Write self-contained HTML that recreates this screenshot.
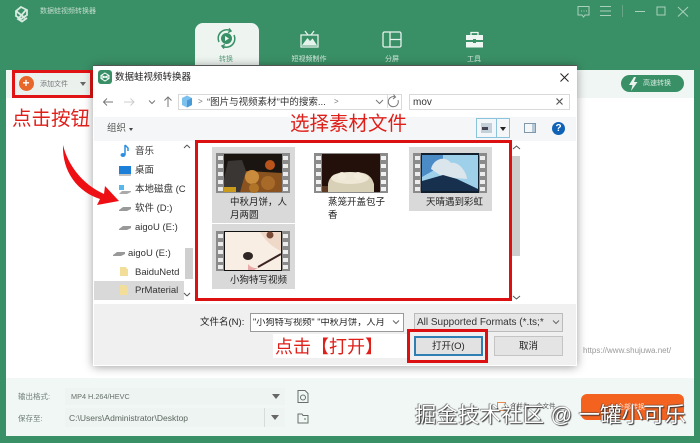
<!DOCTYPE html>
<html lang="zh"><head><meta charset="utf-8"><title>数据蛙视频转换器</title>
<style>
html,body{margin:0;padding:0;background:#3a9066}
body{width:700px;height:443px;position:relative;overflow:hidden;background:#3a9066;font-family:"Liberation Sans","Noto Sans CJK SC",sans-serif;color:#333;filter:blur(.3px)}
div,span,svg{position:absolute}
.t{white-space:nowrap;line-height:1}
.red{color:#df1f1a;font-family:"Noto Sans CJK SC",sans-serif;white-space:nowrap;line-height:1}
.nav{font-size:7px;color:#d8eae1;white-space:nowrap;line-height:1;transform:translateX(-50%)}
.n{font-size:9.5px;color:#333;left:135px;white-space:nowrap;line-height:1}
.f{font-size:9.5px;color:#222;line-height:13px}
</style></head>
<body>
<!-- header -->
<svg style="left:13px;top:5px" width="17" height="18" viewBox="0 0 17 18" fill="none" stroke="#d7ebe1" stroke-width="1.8"><path d="M8 2 L14 5 L14 10 L8 14 L3 11 L3 6 Z M3 6 L12 13 M13 5 L5 14 L9 16.5 L14 13"/></svg>
<div class="t" style="left:40px;top:8px;font-size:7px;color:#c3dccf">数据蛙视频转换器</div>
<svg style="left:576px;top:4px" width="115" height="15" viewBox="0 0 115 15" fill="none" stroke="#a9d0bc" stroke-width="1"><path d="M2 2.5 H13 V11 H9 L7.5 13 L6 11 H2 Z"/><path d="M5 7 h1 M7.5 7 h1 M10 7 h1"/><path d="M24 2.5 H35 M24 7 H35 M24 11.5 H35"/><path d="M46.5 1 V13" stroke="#64a685"/><path d="M59 7.5 H69"/><path d="M81 3 H89 V11 H81 Z"/><path d="M102 3 L112 12.5 M112 3 L102 12.5"/></svg>
<div style="left:195px;top:23px;width:64px;height:50px;background:#eef5f1;border-radius:8px 8px 0 0"></div>
<svg style="left:216px;top:28px" width="21" height="21" viewBox="0 0 21 21" fill="none" stroke="#3a9066" stroke-width="1.5"><path d="M3 14 A8.5 8.5 0 0 1 14 2.5 M18 7 A8.5 8.5 0 0 1 7 18.5"/><path d="M13 0.5 L15 3 L12 4.5 M8 20.5 L6 18 L9 16.5"/><circle cx="10.5" cy="10.5" r="5.5" fill="#3a9066" stroke="none"/><path d="M9 8 L13 10.5 L9 13 Z" fill="#eef5f1" stroke="none"/></svg>
<div class="nav" style="left:226px;top:55.5px;color:#5c9c7e">转换</div>
<svg style="left:300px;top:30px" width="19" height="18" viewBox="0 0 19 18" fill="none" stroke="#e6f2ec" stroke-width="1.3"><path d="M1 5 H18 V17 H1 Z"/><path d="M5 1 L8 5 M14 1 L11 5"/><path d="M3 15 L7.5 9 L10 12 L12.5 9.5 L16 15 Z" fill="#e6f2ec"/></svg>
<div class="nav" style="left:309px;top:55.5px">短视频制作</div>
<svg style="left:382px;top:31px" width="20" height="17" viewBox="0 0 20 17" fill="none" stroke="#e6f2ec" stroke-width="1.3"><rect x="1" y="1" width="18" height="15" rx="1.5"/><path d="M8 1 V16 M8 8.5 H19"/></svg>
<div class="nav" style="left:392px;top:55.5px">分屏</div>
<svg style="left:465px;top:31px" width="19" height="17" viewBox="0 0 19 17"><path d="M6 4 V1.5 H13 V4" fill="none" stroke="#eef6f2" stroke-width="1.3"/><path d="M1 4 H18 V9 H1 Z M1 11 H18 V16.5 H1 Z" fill="#eef6f2"/><rect x="8" y="8" width="3" height="4" fill="#3a9066"/></svg>
<div class="nav" style="left:474px;top:55.5px">工具</div>
<!-- main panel -->
<div style="left:6px;top:70px;width:688px;height:366px;background:#fff"></div>
<div style="left:6px;top:70px;width:688px;height:28px;background:#f0f6f3"></div>
<div style="left:6px;top:378px;width:688px;height:58px;background:#f1f7f5"></div>
<div style="left:12px;top:70px;width:75px;height:22px;border:3px solid #e01414;background:#ebf2ee"></div>
<div style="left:18.500px;top:75.500px;width:15px;height:15px;border-radius:50%;background:#e8682c"></div>
<div class="t" style="left:22.500px;top:77px;font-size:12px;color:#fff;font-weight:bold">+</div>
<div class="t" style="left:40px;top:80.500px;font-size:7px;color:#777">添加文件</div>
<div style="left:80px;top:82px;border:3.500px solid transparent;border-top:4px solid #666"></div>
<div style="left:621px;top:75px;width:63px;height:17px;border-radius:9px;background:#3a9066"></div>
<svg style="left:628px;top:77px" width="10" height="14" viewBox="0 0 10 14"><path d="M6 0 L1 8 H4.5 L3 14 L9.5 5 H6 L8 0 Z" fill="#e9f4ee"/></svg>
<div class="t" style="left:643px;top:80px;font-size:7px;color:#d4e9de">高速转换</div>
<svg style="left:540px;top:212px" width="31" height="19" viewBox="0 0 31 19"><rect width="31" height="19" fill="#777"/><rect x="3" y="1" width="25" height="17" fill="#f4dcc9"/><circle cx="14" cy="12" r="2.5" fill="#35241f"/><path d="M14 16 L25 8" stroke="#5b2a26" stroke-width="1.3"/><circle cx="24" cy="3" r="2" fill="#8b5a44"/><g fill="#eee"><rect x="1" y="2" width="1.5" height="2"/><rect x="1" y="6" width="1.5" height="2"/><rect x="1" y="10" width="1.5" height="2"/><rect x="1" y="14" width="1.5" height="2"/><rect x="28.5" y="2" width="1.5" height="2"/><rect x="28.5" y="6" width="1.5" height="2"/><rect x="28.5" y="10" width="1.5" height="2"/><rect x="28.5" y="14" width="1.5" height="2"/></g></svg>
<div class="t" style="left:583px;top:347px;font-size:8px;color:#9a9a9a">https://www.shujuwa.net/</div>
<!-- bottom bar -->
<div class="t" style="left:18px;top:393px;font-size:7.5px;color:#6e7c76">输出格式:</div>
<div class="t" style="left:18px;top:415px;font-size:7.5px;color:#6e7c76">保存至:</div>
<div style="left:65px;top:388px;width:220px;height:17px;background:#eef4f1"></div>
<div style="left:65px;top:408px;width:220px;height:19px;background:#eef4f1"></div>
<div class="t" style="left:71px;top:393px;font-size:7.3px;color:#66706b">MP4 H.264/HEVC</div>
<div class="t" style="left:69px;top:414px;font-size:8.5px;color:#5c6661">C:\Users\Administrator\Desktop</div>
<div style="left:272px;top:394px;border:4px solid transparent;border-top:5px solid #666"></div>
<div style="left:271px;top:415px;border:4px solid transparent;border-top:5px solid #666"></div>
<div style="left:264px;top:408px;width:1px;height:19px;background:#d5dcd9"></div>
<svg style="left:296px;top:389px" width="14" height="36" viewBox="0 0 14 36" fill="none" stroke="#66706b"><path d="M2 1.5 H9 L12 4.5 V13.5 H2 Z"/><circle cx="7" cy="8.5" r="2.5"/><path d="M2 25 H6 L7 26.5 H12 V34 H2 Z"/><path d="M8 30 H10"/></svg>
<div style="left:581px;top:394px;width:103px;height:26px;border-radius:6px;background:#f4621f"></div>
<div class="t" style="left:617px;top:403.500px;font-size:7px;color:#ffe3d4">全部转换</div>
<div style="left:497px;top:402px;width:7px;height:7px;border:1.5px solid #e88a52;background:#f8f8f5"></div>
<div class="t" style="left:510px;top:404px;font-size:6.5px;color:#555">合并为一个文件</div>
<!-- dialog -->
<div style="left:93px;top:65px;width:484px;height:301px;background:#fff;box-shadow:0 1px 9px rgba(0,0,0,.38);border-top:1px solid #555;box-sizing:border-box"></div>
<div style="left:98px;top:70px;width:14px;height:14px;border-radius:3px;background:#3a9066"></div>
<svg style="left:100px;top:72px" width="10" height="10" viewBox="0 0 10 10" fill="none" stroke="#fff" stroke-width="1"><path d="M5 1 L9 3.5 V6.5 L5 9 L1 6.500 V3.5 Z M1 3.5 L9 6.5 M9 3.5 L1 6.5"/></svg>
<div class="t" style="left:115px;top:72.500px;font-size:9.5px;color:#222">数据蛙视频转换器</div>
<svg style="left:559px;top:72px" width="11" height="11" viewBox="0 0 11 11" stroke="#222"><path d="M1.5 1.5 L9.5 9.5 M9.5 1.5 L1.5 9.5"/></svg>
<!-- address row -->
<svg style="left:102px;top:94px" width="72" height="16" viewBox="0 0 72 16" fill="none" stroke="#777"><path d="M11 8 H1.5 M5 4.5 L1.5 8 L5 11.5"/><path d="M22 8 H32 M28.5 4.5 L32 8 L28.5 11.5" stroke="#ccc"/><path d="M47 6.5 L50 9.5 L53 6.5"/><path d="M66 13 V3 M62.5 6.5 L66 3 L69.5 6.5"/></svg>
<div style="left:178px;top:94px;width:224px;height:16px;border:1px solid #d9d9d9;box-sizing:border-box"></div>
<svg style="left:181px;top:95px" width="12" height="13" viewBox="0 0 12 13"><path d="M1 3 L6 .5 L11 3 V10 L6 12.5 L1 10 Z" fill="#7cc0ee"/><path d="M6 5.5 L11 3 V10 L6 12.5 Z" fill="#4a9ad8"/></svg>
<div class="t" style="left:198px;top:98px;font-size:8px;color:#777">&gt;</div>
<div class="t" style="left:207px;top:97.500px;font-size:9.5px;color:#333">“图片与视频素材”中的搜索...</div>
<div class="t" style="left:334px;top:98px;font-size:8px;color:#777">&gt;</div>
<svg style="left:374px;top:94px" width="28" height="15" viewBox="0 0 28 15" fill="none" stroke="#777"><path d="M2 6 L5.5 9.5 L9 6"/><path d="M13.5 1 V14" stroke="#ddd"/><path d="M24 6 A5 5 0 1 1 21 3 M19.5 .5 L21.5 3 L19 5"/></svg>
<div style="left:409px;top:94px;width:161px;height:16px;border:1px solid #d9d9d9;box-sizing:border-box"></div>
<div class="t" style="left:413px;top:97.500px;font-size:10px;color:#333">mov</div>
<svg style="left:555px;top:97px" width="9" height="9" viewBox="0 0 9 9" stroke="#555" stroke-width="1.2"><path d="M1.5 1.5 L7.5 7.5 M7.5 1.5 L1.5 7.5"/></svg>
<!-- toolbar -->
<div style="left:94px;top:117px;width:482px;height:24px;background:#f5f6f7"></div>
<div class="t" style="left:107px;top:124px;font-size:9.5px;color:#555">组织</div>
<div style="left:129px;top:128px;border:2.5px solid transparent;border-top:3px solid #444"></div>
<div style="left:476px;top:118px;width:21px;height:20px;border:1px solid #8cc3dc;box-sizing:border-box;background:#f4f7f9"></div>
<div style="left:496px;top:118px;width:14px;height:20px;border:1px solid #8cc3dc;box-sizing:border-box"></div>
<svg style="left:481px;top:123px" width="11" height="10" viewBox="0 0 11 10"><rect width="11" height="10" fill="#c3d0da"/><rect x="1" y="4" width="6" height="3" fill="#445"/></svg>
<div style="left:500px;top:127px;border:3px solid transparent;border-top:4px solid #222"></div>
<svg style="left:524px;top:123px" width="12" height="10" viewBox="0 0 12 10"><rect x=".5" y=".5" width="11" height="9" fill="#f5f6f7" stroke="#7f98ab"/><rect x="8" y="1" width="3" height="8" fill="#b5c9d8"/></svg>
<div style="left:552px;top:122px;width:13px;height:13px;border-radius:50%;background:#0f62b5;color:#fff;font:bold 10px/13px 'Liberation Sans',sans-serif;text-align:center">?</div>
<!-- nav pane -->
<div style="left:94px;top:281px;width:90px;height:19px;background:#d9d9d9"></div>
<div class="n" style="top:147px">音乐</div>
<div class="n" style="top:166px">桌面</div>
<div class="n" style="top:185px">本地磁盘 (C</div>
<div class="n" style="top:204px">软件 (D:)</div>
<div class="n" style="top:223px">aigoU (E:)</div>
<div class="n" style="top:249px;left:128px">aigoU (E:)</div>
<div class="n" style="top:268px">BaiduNetd</div>
<div class="n" style="top:286px">PrMaterial</div>
<svg style="left:112px;top:142px" width="80" height="158" viewBox="0 0 80 158" fill="none"><path d="M13 3 V13 M13 3 L16 6 L16 9" stroke="#2d8ee0" stroke-width="1.5"/><ellipse cx="11" cy="13" rx="2.5" ry="2" fill="#2d8ee0"/><rect x="7" y="24" width="12" height="8" fill="#1d7fd8"/><path d="M7 33 H19" stroke="#888"/><rect x="7" y="43" width="5" height="5" fill="#58b8ea"/><path d="M7 52 L10 49 H19 V50 L15 52 H7 Z" fill="#aaa"/><path d="M7 68 L11 65 H19 L19 67 L15 69 H7 Z" fill="#999"/><path d="M7 87 L11 84 H19 L19 86 L15 88 H7 Z" fill="#999"/><path d="M1 113 L5 110 H13 L13 112 L9 114 H1 Z" fill="#999"/><path d="M8 125 H14 L15 127 H16 V134 H8 Z" fill="#f2de98"/><path d="M8 143 H14 L15 145 H16 V153 H8 Z" fill="#f2de98"/><path d="M75 3 L72 6 M75 3 L78 6" stroke="#555"/><path d="M75 154 L72 151 M75 154 L78 151" stroke="#555"/></svg>
<div style="left:185px;top:248px;width:8px;height:31px;background:#cfcfcf"></div>
<!-- right scrollbar -->
<div style="left:512px;top:141px;width:17px;height:169px;background:#fff"></div>
<div style="left:512px;top:156px;width:8px;height:100px;background:#cdcdcd"></div>
<svg style="left:512px;top:144px" width="9" height="157" viewBox="0 0 9 157" fill="none" stroke="#555"><path d="M1 5 L4.5 2 L8 5"/><path d="M1 152 L4.5 155 L8 152"/></svg>
<!-- files -->
<div style="left:212px;top:147px;width:83px;height:76px;background:#d9d9d9"></div>
<div style="left:212px;top:224px;width:83px;height:65px;background:#d9d9d9"></div>
<div style="left:409px;top:147px;width:83px;height:64px;background:#d9d9d9"></div>
<svg style="left:216px;top:153px" width="74" height="40" viewBox="0 0 74 40"><rect width="74" height="40" fill="#8b8b8b"/><rect x="8" y="1" width="58" height="38" fill="#1b1512"/><path d="M8 26 L12 8 L26 7 L30 18 L24 39 H8 Z" fill="#3a3634"/><path d="M24 39 L30 18 L66 20 V39 Z" fill="#8a521f"/><circle cx="36" cy="24" r="7" fill="#c98c3c"/><circle cx="52" cy="30" r="7" fill="#a86a28"/><circle cx="54" cy="12" r="5" fill="#b8531c"/><circle cx="38" cy="35" r="5" fill="#b07428"/><path d="M8 34 H20 V39 H8 Z" fill="#c99a1c"/><g fill="#ececec"><rect x="2" y="3" width="5" height="4"/><rect x="2" y="11" width="5" height="4"/><rect x="2" y="19" width="5" height="4"/><rect x="2" y="27" width="5" height="4"/><rect x="2" y="34" width="5" height="4"/><rect x="67" y="3" width="5" height="4"/><rect x="67" y="11" width="5" height="4"/><rect x="67" y="19" width="5" height="4"/><rect x="67" y="27" width="5" height="4"/><rect x="67" y="34" width="5" height="4"/></g></svg>
<svg style="left:314px;top:153px" width="74" height="40" viewBox="0 0 74 40"><rect width="74" height="40" fill="#8b8b8b"/><rect x="8" y="1" width="58" height="38" fill="#24100a"/><path d="M14 31 C16 20 26 19 36 20 C48 18 57 20 60 31 V39 H14 Z" fill="#d9d0b8"/><ellipse cx="36" cy="25" rx="19" ry="6" fill="#efe8d6"/><circle cx="28" cy="23" r="4" fill="#f3ecdc"/><circle cx="44" cy="23" r="4" fill="#f3ecdc"/><path d="M8 33 H14 V39 H8 Z" fill="#5c3a24"/><g fill="#f2f2f2"><rect x="2" y="3" width="5" height="4"/><rect x="2" y="11" width="5" height="4"/><rect x="2" y="19" width="5" height="4"/><rect x="2" y="27" width="5" height="4"/><rect x="2" y="34" width="5" height="4"/><rect x="67" y="3" width="5" height="4"/><rect x="67" y="11" width="5" height="4"/><rect x="67" y="19" width="5" height="4"/><rect x="67" y="27" width="5" height="4"/><rect x="67" y="34" width="5" height="4"/></g></svg>
<svg style="left:413px;top:153px" width="74" height="40" viewBox="0 0 74 40"><rect width="74" height="40" fill="#8b8b8b"/><rect x="8" y="0" width="58" height="40" fill="#12202e"/><rect x="9" y="2" width="56" height="36" fill="#9fd0ea"/><path d="M9 2 H30 V12 L9 24 Z" fill="#4b8cc6"/><path d="M18 16 C20 6 32 2 38 10 C46 8 54 20 54 26 L30 24 Z" fill="#dbe5ec"/><path d="M9 28 L30 22 L44 26 L65 36 V38 H9 Z" fill="#16304e"/><g fill="#ececec"><rect x="2" y="3" width="5" height="4"/><rect x="2" y="11" width="5" height="4"/><rect x="2" y="19" width="5" height="4"/><rect x="2" y="27" width="5" height="4"/><rect x="2" y="34" width="5" height="4"/><rect x="67" y="3" width="5" height="4"/><rect x="67" y="11" width="5" height="4"/><rect x="67" y="19" width="5" height="4"/><rect x="67" y="27" width="5" height="4"/><rect x="67" y="34" width="5" height="4"/></g></svg>
<svg style="left:216px;top:231px" width="74" height="40" viewBox="0 0 74 40"><rect width="74" height="40" fill="#8b8b8b"/><rect x="8" y="0" width="58" height="40" fill="#111"/><rect x="9" y="1" width="56" height="38" fill="#f8eee4"/><path d="M44 1 H65 V20 C56 16 50 10 44 1 Z" fill="#efd8c8"/><circle cx="54" cy="4" r="3.5" fill="#7b4b38"/><ellipse cx="32" cy="25" rx="5" ry="4" fill="#2f2522"/><path d="M42 36 L65 23" stroke="#3a2322" stroke-width="2"/><path d="M32 33 C36 38 42 38 46 35 L38 39 H32 Z" fill="#e9a9a6"/><g fill="#ececec"><rect x="2" y="3" width="5" height="4"/><rect x="2" y="11" width="5" height="4"/><rect x="2" y="19" width="5" height="4"/><rect x="2" y="27" width="5" height="4"/><rect x="2" y="34" width="5" height="4"/><rect x="67" y="3" width="5" height="4"/><rect x="67" y="11" width="5" height="4"/><rect x="67" y="19" width="5" height="4"/><rect x="67" y="27" width="5" height="4"/><rect x="67" y="34" width="5" height="4"/></g></svg>
<div class="f" style="left:230px;top:196px;width:60px">中秋月饼，人<br>月两圆</div>
<div class="f" style="left:328px;top:196px;width:60px">蒸笼开盖包子<br>香</div>
<div class="f" style="left:426px;top:196px;white-space:nowrap">天晴遇到彩虹</div>
<div class="f" style="left:230px;top:274px;white-space:nowrap">小狗特写视频</div>
<!-- red box -->
<div style="left:195px;top:140px;width:311px;height:155px;border:3px solid #dc1010"></div>
<!-- dialog bottom -->
<div style="left:94px;top:304px;width:482px;height:61px;background:#f0f0f0"></div>
<div class="t" style="left:200px;top:318px;font-size:9.5px;color:#222">文件名(N):</div>
<div style="left:250px;top:313px;width:154px;height:19px;border:1px solid #9a9a9a;background:#fff;box-sizing:border-box"></div>
<div class="t" style="left:253px;top:318px;font-size:9.2px;color:#222;width:135px;overflow:hidden">"小狗特写视频" "中秋月饼，人月</div>
<svg style="left:392px;top:320px" width="8" height="5" viewBox="0 0 8 5" fill="none" stroke="#666"><path d="M1 .5 L4 3.5 L7 .5"/></svg>
<div style="left:414px;top:313px;width:149px;height:19px;border:1px solid #bbb;background:#e6e6e6;box-sizing:border-box"></div>
<div class="t" style="left:417px;top:318px;font-size:10px;color:#333">All Supported Formats (*.ts;*</div>
<svg style="left:552px;top:320px" width="8" height="5" viewBox="0 0 8 5" fill="none" stroke="#666"><path d="M1 .5 L4 3.5 L7 .5"/></svg>
<div style="left:407px;top:329px;width:75px;height:28px;border:3px solid #dc1010"></div>
<div style="left:414px;top:336px;width:69px;height:20px;background:#e2e2e2;border:2px solid #2f7fb4;box-sizing:border-box"></div>
<div class="t" style="left:432px;top:341.500px;font-size:9.5px;color:#222">打开(O)</div>
<div style="left:494px;top:336px;width:69px;height:20px;background:#e4e4e4;border:1px solid #c4c4c4;box-sizing:border-box"></div>
<div class="t" style="left:519px;top:341.500px;font-size:9.5px;color:#222">取消</div>
<!-- annotations -->
<div class="red" style="left:12px;top:107px;font-size:19.5px">点击按钮</div>
<div class="red" style="left:290px;top:112px;font-size:19.5px">选择素材文件</div>
<div style="left:273px;top:334px;width:134px;height:24px;background:#fff"></div>
<div class="red" style="left:275px;top:337px;font-size:18px">点击【打开】</div>
<svg style="left:55px;top:140px" width="72" height="70" viewBox="55 140 72 70"><path d="M63 145 C68 165 82 184 104 194 L105 186 L119 201 L97 205 L100 199 C78 192 62 172 63 145 Z" fill="#ee0f14"/></svg>
<!-- watermark -->
<div class="t" style="left:415px;top:405px;font-size:21.3px;letter-spacing:.25px;color:#fff;font-family:'Liberation Sans','Noto Sans CJK SC',sans-serif;text-shadow:1px 1px 1px #333,-.6px -.6px 1px #444">掘金技术社区 @ 一罐小可乐</div>
</body></html>
